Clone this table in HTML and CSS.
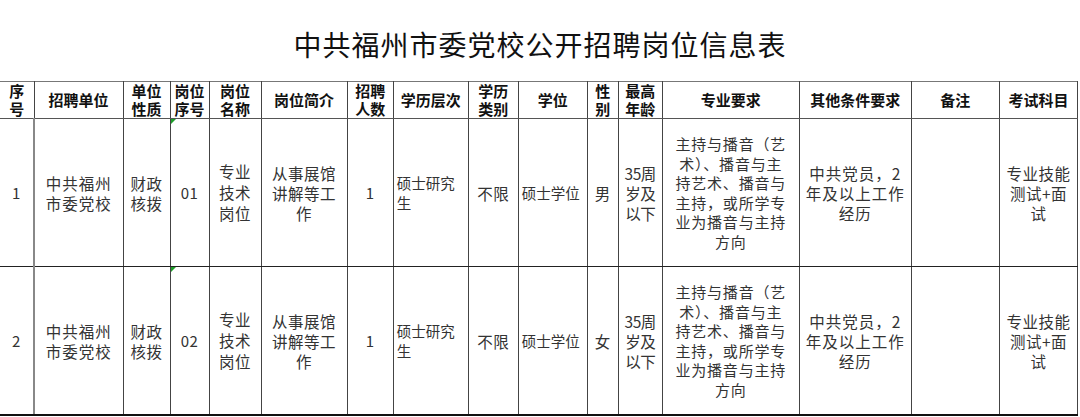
FILE: index.html
```html
<!DOCTYPE html>
<html lang="zh-CN">
<head>
<meta charset="utf-8">
<title>中共福州市委党校公开招聘岗位信息表</title>
<link rel="stylesheet" href="styles.css">
</head>
<body>
<div class="title">中共福州市委党校公开招聘岗位信息表</div>
<table class="grid">
  <colgroup>
    <col style="width:34px"><col style="width:89px"><col style="width:47px"><col style="width:39px">
    <col style="width:52px"><col style="width:86px"><col style="width:46px"><col style="width:75px">
    <col style="width:50px"><col style="width:69px"><col style="width:31px"><col style="width:44px">
    <col style="width:137px"><col style="width:112px"><col style="width:88px"><col style="width:78px">
  </colgroup>
  <thead>
    <tr>
      <th class="first">序<br>号</th>
      <th>招聘单位</th>
      <th>单位<br>性质</th>
      <th>岗位<br>序号</th>
      <th>岗位<br>名称</th>
      <th>岗位简介</th>
      <th>招聘<br>人数</th>
      <th>学历层次</th>
      <th>学历<br>类别</th>
      <th>学位</th>
      <th>性<br>别</th>
      <th>最高<br>年龄</th>
      <th>专业要求</th>
      <th>其他条件要求</th>
      <th>备注</th>
      <th>考试科目</th>
    </tr>
  </thead>
  <tbody>
    <tr>
      <td class="first num">1</td>
      <td class="wide">中共福州<br>市委党校</td>
      <td>财政<br>核拨</td>
      <td class="num flag">01</td>
      <td class="tall">专业<br>技术<br>岗位</td>
      <td>从事展馆<br>讲解等工<br>作</td>
      <td class="num">1</td>
      <td class="left small">硕士研究<br>生</td>
      <td>不限</td>
      <td class="left small">硕士学位</td>
      <td>男</td>
      <td class="age">35周<br>岁及<br>以下</td>
      <td class="major">主持与播音（艺<br>术）、播音与主<br>持艺术、播音与<br>主持，或所学专<br>业为播音与主持<br>方向</td>
      <td class="wide">中共党员，2<br>年及以上工作<br>经历</td>
      <td></td>
      <td>专业技能<br>测试+面<br>试</td>
    </tr>
    <tr>
      <td class="first num">2</td>
      <td class="wide">中共福州<br>市委党校</td>
      <td>财政<br>核拨</td>
      <td class="num flag">02</td>
      <td class="tall">专业<br>技术<br>岗位</td>
      <td>从事展馆<br>讲解等工<br>作</td>
      <td class="num">1</td>
      <td class="left small">硕士研究<br>生</td>
      <td>不限</td>
      <td class="left small">硕士学位</td>
      <td>女</td>
      <td class="age">35周<br>岁及<br>以下</td>
      <td class="major">主持与播音（艺<br>术）、播音与主<br>持艺术、播音与<br>主持，或所学专<br>业为播音与主持<br>方向</td>
      <td class="wide">中共党员，2<br>年及以上工作<br>经历</td>
      <td></td>
      <td>专业技能<br>测试+面<br>试</td>
    </tr>
  </tbody>
</table>
</body>
</html>
```
FILE: styles.css
```css
html, body {
  margin: 0;
  padding: 0;
  background: #ffffff;
}
body {
  width: 1080px;
  height: 417px;
  overflow: hidden;
  font-family: "Noto Sans CJK SC", "Noto Sans", sans-serif;
  color: #222;
}
.title {
  height: 81px;
  box-sizing: border-box;
  padding-top: 25px;
  text-align: center;
  font-size: 28px;
  line-height: 38px;
  font-weight: 400;
  color: #111;
  letter-spacing: 1px;
}
.grid {
  table-layout: fixed;
  border-collapse: collapse;
  width: 1078px;
}
.grid th, .grid td {
  border: 1px solid #444;
  padding: 0;
  text-align: center;
  vertical-align: middle;
  overflow: hidden;
}
.grid th {
  height: 36px;
  font-size: 15px;
  line-height: 18px;
  font-weight: 700;
  color: #111;
  border-top-color: #777;
  border-bottom-color: #555;
}
.grid td {
  height: 147px;
  font-size: 15.5px;
  line-height: 20px;
  font-weight: 400;
  color: #333;
  letter-spacing: 0.5px;
}
.grid tbody tr:last-child td {
  border-bottom: 2px solid #111;
}
.grid tbody tr:first-child td {
  border-bottom: 1px solid #222;
}
.grid th.first, .grid td.first {
  border-left: none;
}
.grid td.first {
  border-right: 2px solid #888;
}
.grid td.num {
  font-size: 15px;
}
.grid td.wide {
  letter-spacing: 1px;
}
.grid td.tall {
  line-height: 21px;
}
.grid td.left {
  text-align: left;
  padding-left: 3px;
  letter-spacing: 0;
}
.grid td.small {
  font-size: 14.5px;
}
.grid td.age {
  letter-spacing: -0.5px;
}
.grid td.major {
  line-height: 19.5px;
  font-size: 15px;
  letter-spacing: 0.8px;
}
.grid td.flag {
  position: relative;
}
.grid td.flag::before {
  content: "";
  position: absolute;
  left: 0;
  top: 0;
  width: 0;
  height: 0;
  border-top: 5px solid #1e9e2a;
  border-right: 5px solid transparent;
}
```
